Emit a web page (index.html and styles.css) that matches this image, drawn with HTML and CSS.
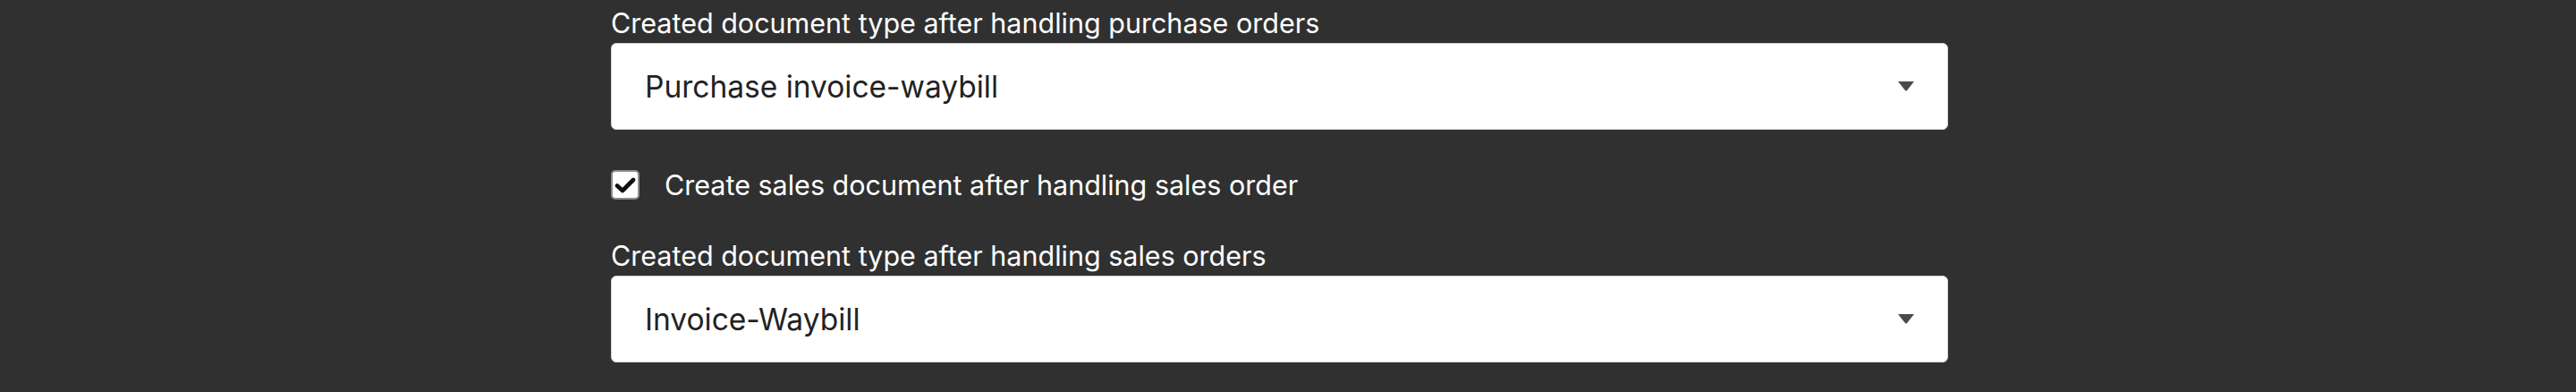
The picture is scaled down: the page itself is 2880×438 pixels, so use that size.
FILE: index.html
```html
<!DOCTYPE html>
<html lang="en">
<head>
    <meta charset="UTF-8">
    <meta name="viewport" content="width=device-width, initial-scale=1.0">
    <title>Document settings</title>
    <link rel="stylesheet" href="styles.css">
</head>
<body>
    <div class="settings">
        <div class="field">
            <label class="field-label" for="purchase-type">Created document type after handling purchase orders</label>
            <div class="select-wrap">
                <select id="purchase-type" class="select">
                    <option>Purchase invoice-waybill</option>
                    <option>Purchase invoice</option>
                    <option>Waybill</option>
                </select>
                <svg class="select-arrow" width="18" height="11" viewBox="0 0 18 11">
                    <path d="M0 0 H18 L9.8 10.2 Q9 11 8.2 10.2 Z" fill="#4a4a4a"/>
                </svg>
            </div>
        </div>

        <label class="check-row">
            <input type="checkbox" class="check-input" checked>
            <span class="check-box">
                <svg width="24" height="18" viewBox="0 0 24 18">
                    <path d="M3 9.5 L9 15 L21 3" fill="none" stroke="#111" stroke-width="4.6" stroke-linecap="round" stroke-linejoin="round"/>
                </svg>
            </span>
            <span class="check-text">Create sales document after handling sales order</span>
        </label>

        <div class="field">
            <label class="field-label" for="sales-type">Created document type after handling sales orders</label>
            <div class="select-wrap">
                <select id="sales-type" class="select">
                    <option>Invoice-Waybill</option>
                    <option>Invoice</option>
                    <option>Waybill</option>
                </select>
                <svg class="select-arrow" width="18" height="11" viewBox="0 0 18 11">
                    <path d="M0 0 H18 L9.8 10.2 Q9 11 8.2 10.2 Z" fill="#4a4a4a"/>
                </svg>
            </div>
        </div>
    </div>
</body>
</html>
```

FILE: styles.css
```css
body {
    margin: 0;
    background-color: #303030;
    color: #fff;
    font-family: Inter, "Noto Sans", sans-serif;
}
.settings {
    width: 1495px;
    padding: 8px 0 0 683px;
}
.field-label {
    display: block;
    font-size: 30.5px;
    line-height: 36px;
    margin-bottom: 4px;
}
.select-wrap {
    position: relative;
}
.select {
    display: block;
    width: 100%;
    height: 97px;
    appearance: none;
    -webkit-appearance: none;
    background: #fff;
    border: 1px solid #d4d4d4;
    border-radius: 6px;
    padding: 0 80px 0 37px;
    font-family: inherit;
    font-size: 33.5px;
    color: #222;
    outline: none;
}
.select-arrow {
    position: absolute;
    right: 38px;
    top: 43px;
    pointer-events: none;
}
.check-row {
    display: flex;
    align-items: center;
    height: 33px;
    margin: 45px 0;
    cursor: pointer;
}
.check-input {
    display: none;
}
.check-box {
    width: 28px;
    height: 29px;
    border: 2px solid #8c8c8c;
    border-radius: 5px;
    background: #fff;
    display: flex;
    align-items: center;
    justify-content: center;
}
.check-text {
    margin-left: 28px;
    font-size: 30.5px;
}
```
